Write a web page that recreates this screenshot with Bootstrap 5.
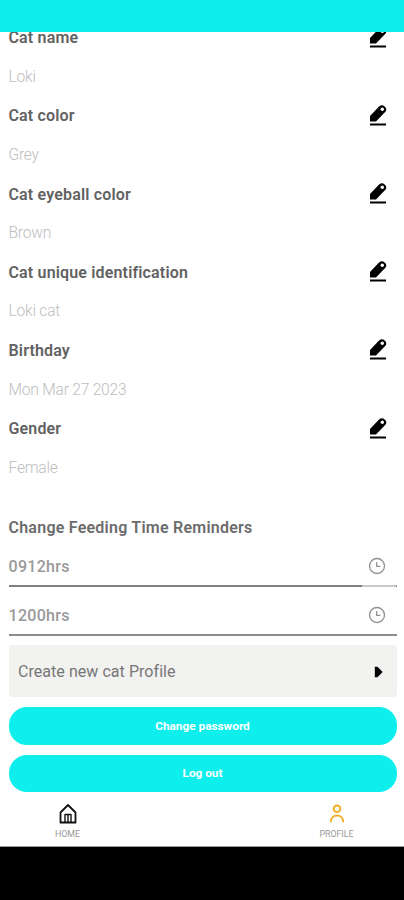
<!DOCTYPE html>
<html lang="en">
<head>
<meta charset="utf-8">
<meta name="viewport" content="width=device-width, initial-scale=1">
<title>Cat profile</title>
<link href="https://cdn.jsdelivr.net/npm/bootstrap@5.3.0/dist/css/bootstrap.min.css" rel="stylesheet">
<style>
body{font-family:Roboto,"Liberation Sans",sans-serif;color:#626262;font-size:16px;line-height:20px;height:900px}
.status-strip{height:32px;background:#0eeeed}
.scroll-view{height:768px;padding:0 7.5px 0 8.5px}
.field-list{margin-top:-13.4px}
.field-row{height:39.1px}
.field-label{font-weight:600;letter-spacing:.16px}
.field-value{font-weight:300;color:#bdbdbd;font-size:15.6px;letter-spacing:-.22px;padding-bottom:1px}
.edit-icon{width:18px;height:21px;margin:-2px 10px 0 0}
.section-title{height:40px;margin-top:20px;font-weight:600;letter-spacing:.24px;color:#6c6c6c}
.section-title span{padding-top:1px}
.time-row span{padding-top:2px}
.time-row{height:39px;border-bottom:2px solid #8c8c8c;color:#999;font-weight:500;letter-spacing:.3px}
.time-row + .time-row{height:49px;padding-top:10px}
.time-row.partial{border-image:linear-gradient(90deg,#808080 0 351px,#c8c8c8 351px 385px,#888 385px) 2}
.clock-icon{width:18px;height:18px;margin-right:10.5px}
.create-row{height:52px;margin-top:9.7px;padding:1px 14px 0 9.5px;background:#f2f2f0;color:#777;border-radius:3px;letter-spacing:.05px}
.pill-btn{height:37.5px;margin-top:10px;border-radius:18px;background:#0eeeed;color:#fff;font-size:11.8px;font-weight:700;line-height:1;padding:1px 0 0;border:0}
.tab-bar{height:47px;border-bottom:1px solid #999}
.tab-item{width:135px;font-size:8.8px;line-height:10px;color:#999;padding-top:3px}
.tab-item svg{width:22px;height:22px;margin-bottom:4px}
</style>
<script src="https://cdn.jsdelivr.net/npm/bootstrap@5.3.0/dist/js/bootstrap.bundle.min.js"></script>
</head>
<body class="bg-black overflow-hidden">
<svg class="d-none" aria-hidden="true">
<symbol id="pencil" viewBox="0 0 18 21"><path d="M1 16.500v-5.500L9.800 1.800a3.600 3.600 0 0 1 5.800-.2 3.800 3.800 0 0 1 1 5L7 16.500z"/><circle cx="13.300" cy="4.300" r="1.700" fill="#fff"/><path d="M1 18.500h16v2H1z"/></symbol>
<symbol id="clock" viewBox="0 0 18 18"><g fill="none" stroke="#929292" stroke-width="1.300"><circle cx="9" cy="9" r="7.500"/><path d="M8.700 5v4.300h3.600"/></g></symbol>
</svg>
<header class="status-strip"></header>
<main class="scroll-view bg-white overflow-hidden">
<div class="field-list">
<div class="field-row field-label d-flex align-items-center justify-content-between"><span>Cat name</span><svg class="edit-icon"><use href="#pencil"/></svg></div>
<div class="field-row field-value d-flex align-items-center">Loki</div>
<div class="field-row field-label d-flex align-items-center justify-content-between"><span>Cat color</span><svg class="edit-icon"><use href="#pencil"/></svg></div>
<div class="field-row field-value d-flex align-items-center">Grey</div>
<div class="field-row field-label d-flex align-items-center justify-content-between"><span>Cat eyeball color</span><svg class="edit-icon"><use href="#pencil"/></svg></div>
<div class="field-row field-value d-flex align-items-center">Brown</div>
<div class="field-row field-label d-flex align-items-center justify-content-between"><span>Cat unique identification</span><svg class="edit-icon"><use href="#pencil"/></svg></div>
<div class="field-row field-value d-flex align-items-center">Loki cat</div>
<div class="field-row field-label d-flex align-items-center justify-content-between"><span>Birthday</span><svg class="edit-icon"><use href="#pencil"/></svg></div>
<div class="field-row field-value d-flex align-items-center">Mon Mar 27 2023</div>
<div class="field-row field-label d-flex align-items-center justify-content-between"><span>Gender</span><svg class="edit-icon"><use href="#pencil"/></svg></div>
<div class="field-row field-value d-flex align-items-center">Female</div>
</div>
<div class="section-title d-flex align-items-center"><span>Change Feeding Time Reminders</span></div>
<div class="time-row partial d-flex align-items-center justify-content-between"><span>0912hrs</span><svg class="clock-icon"><use href="#clock"/></svg></div>
<div class="time-row d-flex align-items-center justify-content-between"><span>1200hrs</span><svg class="clock-icon"><use href="#clock"/></svg></div>
<div class="create-row d-flex align-items-center justify-content-between"><span>Create new cat Profile</span><svg width="9" height="12" viewBox="0 0 9 12"><path d="M.8.800h2.600L8.700 6l-5.300 5.200H.8z"/></svg></div>
<button class="pill-btn btn w-100 d-flex align-items-center justify-content-center">Change password</button>
<button class="pill-btn btn w-100 d-flex align-items-center justify-content-center">Log out</button>
</main>
<nav class="tab-bar bg-white d-flex justify-content-between">
<div class="tab-item d-flex flex-column align-items-center"><svg viewBox="0 0 22 22" fill="none" stroke="#111" stroke-width="1.800" stroke-linejoin="round"><path d="M3.500 9.500 11 2l7.500 7.500V19.500h-15z"/><path d="M8 19v-7.500h6V19M11 12v7" stroke-width="1.400"/></svg><span>HOME</span></div>
<div class="tab-item d-flex flex-column align-items-center"><svg viewBox="0 0 22 22" fill="none" stroke="#edaf24" stroke-width="1.900" stroke-linecap="round"><circle cx="11" cy="5.800" r="3.300"/><path d="M5 18.500c0-8 12-8 12 0"/></svg><span>PROFILE</span></div>
</nav>
</body>
</html>
